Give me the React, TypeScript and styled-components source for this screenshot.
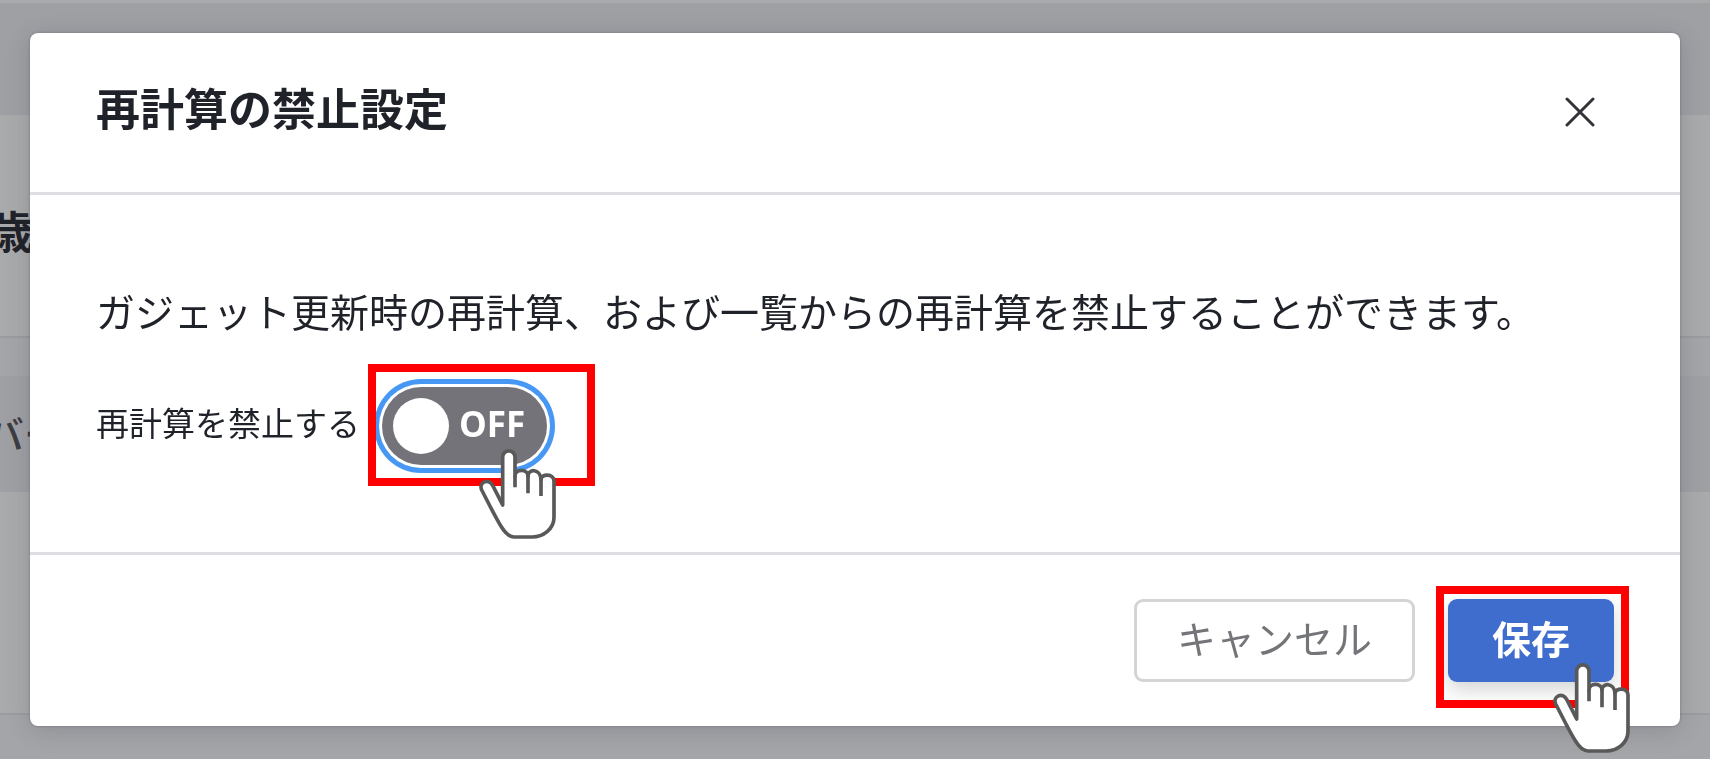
import React, { useState } from 'react';
import styled, { createGlobalStyle } from 'styled-components';

const GlobalStyle = createGlobalStyle`
  *, *::before, *::after { box-sizing: border-box; }
  body {
    margin: 0;
    background: #a4a5a8;
    color: #1f2228;
    font-family: "Open Sans", "Noto Sans CJK JP", sans-serif;
    overflow: hidden;
  }
  button, input { font-family: inherit; }
`;

const Page = styled.div`
  min-height: 100vh;
  border-top: 3px solid #a9aaab;
  background: #a4a5a8;
  overflow: hidden;
`;

const Band = styled.div<{ $height: number; $tone: 'bar' | 'panel' | 'gap' }>`
  display: flex;
  align-items: center;
  height: ${({ $height }) => $height}px;
  background: ${({ $tone }) => ({ bar: '#9fa0a4', panel: '#a9aaab', gap: '#a4a5a8' })[$tone]};
  border-bottom: ${({ $tone }) => ($tone === 'panel' ? '2px solid #9b9c9f' : '0')};
`;

const PageHeading = styled.p`
  margin: 12px 0 0 -10px;
  font-size: 44px;
  line-height: 60px;
  font-weight: 700;
  white-space: nowrap;
`;

const PageTab = styled.p`
  margin: 0 0 0 -15px;
  color: #3c3d42;
  font-size: 39px;
  line-height: 60px;
  font-weight: 500;
  white-space: nowrap;
`;

const Overlay = styled.div`
  position: fixed;
  inset: 0;
  display: flex;
  align-items: flex-start;
  padding: 33px 30px;
`;

const Dialog = styled.section`
  flex: 1;
  min-width: 0;
  border-radius: 8px;
  background: #fff;
  box-shadow: 0 4px 24px rgba(50, 50, 70, 0.2), 0 0 3px rgba(40, 40, 50, 0.3);
`;

const Header = styled.header`
  display: flex;
  align-items: center;
  justify-content: space-between;
  padding: 39px 60px 40px 66px;
  border-bottom: 3px solid #dddfe2;
`;

const Title = styled.h1`
  margin: 0;
  padding-bottom: 6px;
  font-size: 44px;
  line-height: 74px;
  font-weight: 700;
`;

const CloseButton = styled.button`
  display: grid;
  place-items: center;
  width: 80px;
  height: 80px;
  padding: 0;
  border: 0;
  background: none;
  cursor: pointer;
`;

const Body = styled.div`
  padding: 77px 66px 87px;
`;

const Description = styled.p`
  margin: 0 0 35px;
  font-size: 39px;
  line-height: 80px;
  white-space: nowrap;
`;

const SettingRow = styled.div`
  display: flex;
  align-items: center;
  gap: 22px;
`;

const SettingLabel = styled.label`
  padding-bottom: 4px;
  font-size: 33px;
  line-height: 48px;
`;

const Anchor = styled.div`
  position: relative;
  display: flex;
`;

const Track = styled.span<{ $on: boolean }>`
  display: flex;
  flex-direction: ${({ $on }) => ($on ? 'row-reverse' : 'row')};
  align-items: center;
  gap: 10px;
  width: 165px;
  height: 78px;
  padding: 0 11px;
  border-radius: 39px;
  background: ${({ $on }) => ($on ? '#3f6dcd' : '#747379')};
  box-shadow: 0 0 0 3px #fff, 0 0 0 8px #4798f5;
  color: #fff;
  font-size: 35px;
  line-height: 48px;
  font-weight: 700;
`;

const Knob = styled.span`
  width: 56px;
  height: 56px;
  border-radius: 50%;
  background: #fff;
`;

const StateText = styled.span`
  padding-bottom: 4px;
`;

const SwitchInput = styled.input`
  position: absolute;
  inset: 0;
  width: 100%;
  height: 100%;
  margin: 0;
  opacity: 0;
  cursor: pointer;
`;

const Footer = styled.footer`
  display: flex;
  justify-content: flex-end;
  gap: 33px;
  padding: 44px 66px 44px;
  border-top: 3px solid #dedee2;
`;

const ActionButton = styled.button<{ $primary?: boolean }>`
  height: 83px;
  padding: 0 ${({ $primary }) => ($primary ? 44 : 40)}px 4px;
  border: ${({ $primary }) => ($primary ? '0' : '3px solid #d2d4d6')};
  border-radius: 9px;
  background: ${({ $primary }) => ($primary ? '#3f6dcd' : '#fff')};
  box-shadow: ${({ $primary }) => ($primary ? '0 8px 20px rgba(40, 45, 50, 0.2)' : 'none')};
  color: ${({ $primary }) => ($primary ? '#fff' : '#747579')};
  font-size: 39px;
  line-height: 60px;
  font-weight: ${({ $primary }) => ($primary ? 700 : 400)};
  white-space: nowrap;
  cursor: pointer;
`;

const Highlight = styled.span<{ $inset: string }>`
  position: absolute;
  inset: ${({ $inset }) => $inset};
  border: 8px solid #f00;
  pointer-events: none;
`;

const Pointer = styled.svg<{ $left: number; $top: number }>`
  position: absolute;
  left: ${({ $left }) => $left}px;
  top: ${({ $top }) => $top}px;
  width: 77px;
  height: 90px;
  pointer-events: none;
`;

const Hand = ({ left, top }: { left: number; top: number }) => (
  <Pointer $left={left} $top={top} viewBox="0 0 231 270" aria-hidden="true">
    <g fill="#fff" stroke="#595959" strokeWidth="11" strokeLinejoin="round">
      <path d="M71 168V24A18.5 18.5 0 0 1 108 24V82C108 58 147 58 147 82C147 58 184 58 186 92C186 73 225 73 225 96V205C225 241 192 264 160 264H105C90 264 78 251 68 235C49 205 25 155 8 123C-2 100 29 86 41 109Z" />
      <path fill="none" d="M108 80V115M147 80V133M186 88V141" />
    </g>
  </Pointer>
);

export default function App() {
  const [locked, setLocked] = useState(false);

  return (
    <>
      <GlobalStyle />
      <Page aria-hidden="true">
        <Band $height={112} $tone="bar" />
        <Band $height={223} $tone="panel">
          <PageHeading>歳</PageHeading>
        </Band>
        <Band $height={38} $tone="gap" />
        <Band $height={116} $tone="bar">
          <PageTab>バー</PageTab>
        </Band>
        <Band $height={223} $tone="panel" />
      </Page>
      <Overlay>
        <Dialog role="dialog" aria-modal="true" aria-labelledby="dialog-title">
          <Header>
            <Title id="dialog-title">再計算の禁止設定</Title>
            <CloseButton type="button" aria-label="閉じる">
              <svg width="30" height="30" viewBox="0 0 30 30" aria-hidden="true">
                <path d="M2 2L28 28M28 2L2 28" stroke="#33343a" strokeWidth="3" strokeLinecap="round" />
              </svg>
            </CloseButton>
          </Header>
          <Body>
            <Description>
              ガジェット更新時の再計算、および一覧からの再計算を禁止することができます。
            </Description>
            <SettingRow>
              <SettingLabel htmlFor="lock-switch">再計算を禁止する</SettingLabel>
              <Anchor>
                <Track $on={locked}>
                  <Knob />
                  <StateText>{locked ? 'ON' : 'OFF'}</StateText>
                </Track>
                <SwitchInput
                  id="lock-switch"
                  type="checkbox"
                  role="switch"
                  checked={locked}
                  onChange={(event) => setLocked(event.target.checked)}
                />
                <Highlight $inset="-23px -48px -21px -14px" />
                <Hand left={97} top={62} />
              </Anchor>
            </SettingRow>
          </Body>
          <Footer>
            <ActionButton type="button">キャンセル</ActionButton>
            <Anchor>
              <ActionButton type="button" $primary>
                保存
              </ActionButton>
              <Highlight $inset="-13px -15px -26px -12px" />
              <Hand left={105} top={64} />
            </Anchor>
          </Footer>
        </Dialog>
      </Overlay>
    </>
  );
}
